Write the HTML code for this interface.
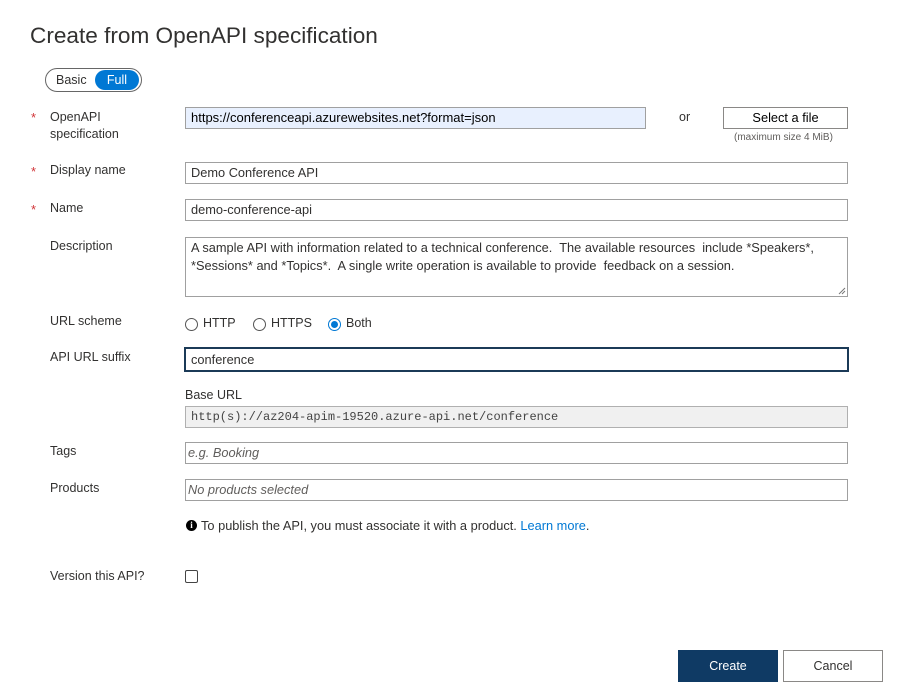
<!DOCTYPE html>
<html><head><meta charset="utf-8"><style>
*{box-sizing:border-box;margin:0;padding:0}
body{width:897px;height:695px;background:#fff;font-family:"Liberation Sans",sans-serif;font-size:12.5px;color:#323130;position:relative;overflow:hidden}
.a{position:absolute;white-space:nowrap}
.in{position:absolute;border:1px solid #a0a0a0;background:#fff;padding:0 5px;line-height:20px;height:22px;overflow:hidden;white-space:nowrap;font-size:12.8px}
.star{position:absolute;left:31px;color:#d13438;font-size:13px}
.ph{font-style:italic;color:#605e5c;padding-left:2px}
.rad{position:absolute;width:13px;height:13px;border:1px solid #555;border-radius:50%;background:#fff}
</style></head><body>
<div class="a" style="left:30px;top:23px;font-size:22.6px;color:#323130">Create from OpenAPI specification</div>
<div class="a" style="left:45px;top:68px;width:97px;height:24px;border:1px solid #666;border-radius:12px"></div>
<div class="a" style="left:56px;top:73px;color:#323130">Basic</div>
<div class="a" style="left:95px;top:70px;width:44px;height:20px;background:#0078d4;border-radius:10px;color:#fff;text-align:center;line-height:20px">Full</div>

<div class="star" style="top:110px">*</div>
<div class="a" style="left:50px;top:109px;line-height:17px">OpenAPI<br>specification</div>
<div class="in" style="left:185px;top:107px;width:461px;background:#e8f0fe;color:#000;font-size:13px">https://conferenceapi.azurewebsites.net?format=json</div>
<div class="a" style="left:679px;top:110px">or</div>
<div class="in" style="left:723px;top:107px;width:125px;text-align:center;color:#000;border-color:#8a8886">Select a file</div>
<div class="a" style="left:734px;top:132px;font-size:10px;color:#605e5c">(maximum size 4 MiB)</div>

<div class="star" style="top:164px">*</div>
<div class="a" style="left:50px;top:163px">Display name</div>
<div class="in" style="left:185px;top:162px;width:663px">Demo Conference API</div>

<div class="star" style="top:202px">*</div>
<div class="a" style="left:50px;top:201px">Name</div>
<div class="in" style="left:185px;top:199px;width:663px">demo-conference-api</div>

<div class="a" style="left:50px;top:239px">Description</div>
<div class="in" style="left:185px;top:237px;width:663px;height:60px;line-height:18px;padding-top:1px;font-size:12.8px">A sample API with information related to a technical conference.&nbsp; The available resources&nbsp; include *Speakers*,<br>*Sessions* and *Topics*.&nbsp; A single write operation is available to provide&nbsp; feedback on a session.</div>
<svg class="a" style="left:838px;top:287px" width="8" height="8"><path d="M1 7L7 1M4 7L7 4" stroke="#777" stroke-width="1"/></svg>

<div class="a" style="left:50px;top:314px">URL scheme</div>
<div class="rad" style="left:185px;top:318px"></div><div class="a" style="left:203px;top:316px">HTTP</div>
<div class="rad" style="left:253px;top:318px"></div><div class="a" style="left:271px;top:316px">HTTPS</div>
<div class="rad" style="left:328px;top:318px;border-color:#0078d4"><div style="position:absolute;left:2px;top:2px;width:7px;height:7px;border-radius:50%;background:#0078d4"></div></div><div class="a" style="left:346px;top:316px">Both</div>

<div class="a" style="left:50px;top:350px">API URL suffix</div>
<div class="in" style="left:184px;top:347px;width:665px;height:25px;border:2px solid #1b3a57;line-height:21px">conference</div>

<div class="a" style="left:185px;top:388px">Base URL</div>
<div class="in" style="left:185px;top:406px;width:663px;background:#f0f0f0;border-color:#b0b0b0;font-family:'Liberation Mono',monospace;font-size:12px;color:#444">http(s)://az204-apim-19520.azure-api.net/conference</div>

<div class="a" style="left:50px;top:444px">Tags</div>
<div class="in" style="left:185px;top:442px;width:663px"><span class="ph" style="padding:0;margin-left:-3px">e.g. Booking</span></div>
<div class="a" style="left:50px;top:481px">Products</div>
<div class="in" style="left:185px;top:479px;width:663px"><span class="ph" style="padding:0;margin-left:-3px">No products selected</span></div>

<div class="a" style="left:186px;top:520px;width:11px;height:11px;border-radius:50%;background:#000;color:#fff;font-size:9px;font-weight:bold;text-align:center;line-height:11px;font-family:'Liberation Serif',serif">i</div>
<div class="a" style="left:201px;top:518px;font-size:12.8px">To publish the API, you must associate it with a product. <span style="color:#0078d4">Learn more</span>.</div>

<div class="a" style="left:50px;top:569px">Version this API?</div>
<div class="a" style="left:185px;top:570px;width:13px;height:13px;border:1px solid #444;border-radius:2px"></div>

<div class="a" style="left:678px;top:650px;width:100px;height:32px;background:#0f3a64;color:#fff;text-align:center;line-height:32px">Create</div>
<div class="a" style="left:783px;top:650px;width:100px;height:32px;border:1px solid #8a8886;text-align:center;line-height:30px">Cancel</div>
</body></html>
